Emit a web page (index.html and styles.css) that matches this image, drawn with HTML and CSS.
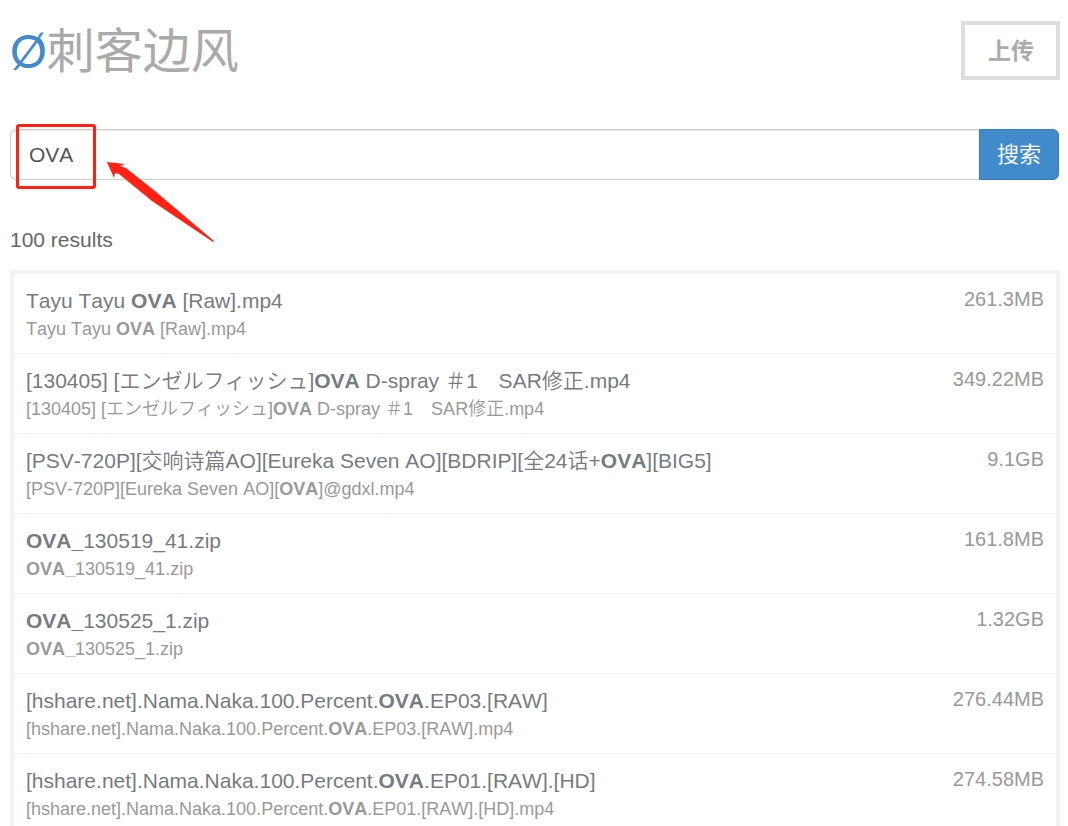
FILE: index.html
```html
<!DOCTYPE html>
<html lang="zh-CN">
<head>
<meta charset="utf-8">
<meta name="viewport" content="width=device-width, initial-scale=1">
<title>Ø刺客边风</title>
<link rel="stylesheet" href="styles.css">
</head>
<body>
<div class="page">
  <header class="header">
    <h1 class="brand"><a class="brand-link" href="#"><span class="brand-mark">Ø</span>刺客边风</a></h1>
    <button class="upload" type="button">上传</button>
  </header>
  <main>
    <form class="search" role="search">
      <input class="search-input" type="text" aria-label="搜索" value="OVA">
      <button class="search-button" type="submit">搜索</button>
      <span class="marker" aria-hidden="true"></span>
      <svg class="arrow" viewBox="0 0 110 84" aria-hidden="true"><path d="M1 1 19 3 14 5 20 7 49 30 108 80 107 81 46 40 13 13 9 12 8 17Z"/></svg>
    </form>
    <p class="count">100 results</p>
    <ul class="results">
      <li class="row"><a class="file" href="#"><span class="title">Tayu Tayu <b>OVA</b> [Raw].mp4</span><span class="name">Tayu Tayu <b>OVA</b> [Raw].mp4</span></a><span class="size">261.3MB</span></li>
      <li class="row"><a class="file" href="#"><span class="title">[130405] [エンゼルフィッシュ]<b>OVA</b> D-spray ＃1　SAR修正.mp4</span><span class="name">[130405] [エンゼルフィッシュ]<b>OVA</b> D-spray ＃1　SAR修正.mp4</span></a><span class="size">349.22MB</span></li>
      <li class="row"><a class="file" href="#"><span class="title">[PSV-720P][交响诗篇AO][Eureka Seven AO][BDRIP][全24话+<b>OVA</b>][BIG5]</span><span class="name">[PSV-720P][Eureka Seven AO][<b>OVA</b>]@gdxl.mp4</span></a><span class="size">9.1GB</span></li>
      <li class="row"><a class="file" href="#"><span class="title"><b>OVA_</b>130519_41.zip</span><span class="name"><b>OVA_</b>130519_41.zip</span></a><span class="size">161.8MB</span></li>
      <li class="row"><a class="file" href="#"><span class="title"><b>OVA_</b>130525_1.zip</span><span class="name"><b>OVA_</b>130525_1.zip</span></a><span class="size">1.32GB</span></li>
      <li class="row"><a class="file" href="#"><span class="title">[hshare.net].Nama.Naka.100.Percent.<b>OVA</b>.EP03.[RAW]</span><span class="name">[hshare.net].Nama.Naka.100.Percent.<b>OVA</b>.EP03.[RAW].mp4</span></a><span class="size">276.44MB</span></li>
      <li class="row"><a class="file" href="#"><span class="title">[hshare.net].Nama.Naka.100.Percent.<b>OVA</b>.EP01.[RAW].[HD]</span><span class="name">[hshare.net].Nama.Naka.100.Percent.<b>OVA</b>.EP01.[RAW].[HD].mp4</span></a><span class="size">274.58MB</span></li>
    </ul>
  </main>
</div>
</body>
</html>
```
FILE: styles.css
```css
* { box-sizing: border-box; }

body {
  margin: 0;
  height: 100vh;
  overflow: hidden;
  background: #fff;
  color: #666;
  font-family: "Liberation Sans", "Noto Sans CJK SC", sans-serif;
  font-size: 21px;
  font-weight: 350;
  line-height: 30px;
  font-kerning: none;
}

button, input { font: inherit; }
a { color: inherit; text-decoration: none; }
b { font-weight: 700; }

.page { padding: 21px 8px 0 10px; }

.header {
  display: flex;
  justify-content: space-between;
  align-items: flex-start;
}

.brand {
  margin: 0;
  color: #aaa;
  font-size: 48px;
  font-weight: 400;
  line-height: 62px;
}

.brand-mark {
  color: #428bca;
  font-family: Lato, sans-serif;
  font-size: 46px;
  line-height: 1;
}

.upload {
  padding: 2px 22px 0 23px;
  border: 4px solid #ddd;
  background: #fff;
  color: #aaa;
  font-size: 23px;
  font-weight: 700;
  line-height: 49px;
}

.search {
  position: relative;
  display: flex;
  margin: 46px 1px 0 0;
}

.search-input {
  flex: 1;
  min-width: 0;
  height: 51px;
  padding: 0 18px;
  border: 1px solid #ccc;
  border-right: 0;
  border-radius: 6px 0 0 6px;
  outline: 0;
  background: #fff;
  box-shadow: inset 0 1px 1px rgba(0, 0, 0, 0.08);
  color: #555;
}

.search-button {
  padding: 0 17px;
  border: 1px solid #357ebd;
  border-radius: 0 6px 6px 0;
  background: #428bca;
  color: #fff;
  font-size: 22px;
}

.marker {
  position: absolute;
  top: -5px;
  left: 6px;
  width: 80px;
  height: 65px;
  border: 3px solid #ff2113;
  border-radius: 3px;
}

.arrow {
  position: absolute;
  top: 32px;
  left: 96px;
  width: 110px;
  height: 84px;
  fill: #ff2113;
}

.count { margin: 45px 0 15px; }

.results {
  margin: 0;
  padding: 0;
  border: 4px solid #f3f3f3;
  list-style: none;
}

.row {
  display: flex;
  justify-content: space-between;
  padding: 12px 12px 11px;
  border-bottom: 1px solid #eee;
}

.title, .name { display: block; }

.title { color: #777b80; }

.name {
  color: #999;
  font-size: 18px;
  line-height: 26px;
}

.size {
  color: #999;
  font-size: 20px;
  line-height: 26px;
}
```
